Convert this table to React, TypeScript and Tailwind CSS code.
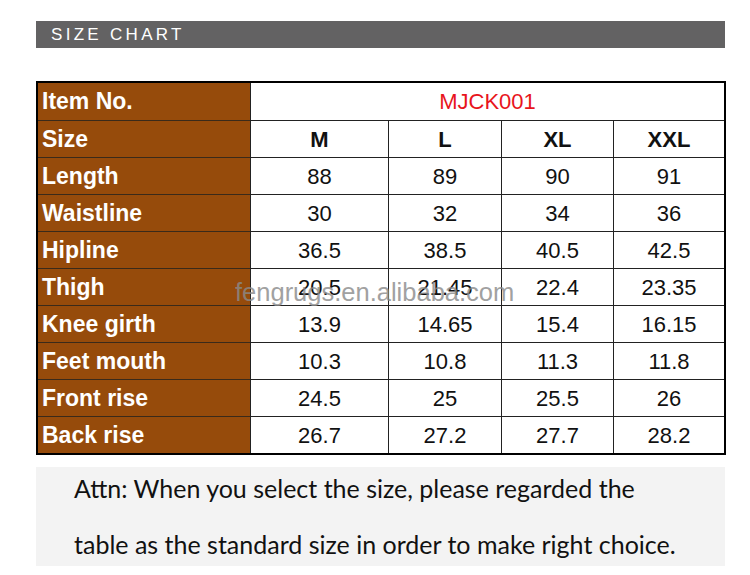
const sizes = ["M", "L", "XL", "XXL"];

const rows: [string, string[]][] = [
  ["Length", ["88", "89", "90", "91"]],
  ["Waistline", ["30", "32", "34", "36"]],
  ["Hipline", ["36.5", "38.5", "40.5", "42.5"]],
  ["Thigh", ["20.5", "21.45", "22.4", "23.35"]],
  ["Knee girth", ["13.9", "14.65", "15.4", "16.15"]],
  ["Feet mouth", ["10.3", "10.8", "11.3", "11.8"]],
  ["Front rise", ["24.5", "25", "25.5", "26"]],
  ["Back rise", ["26.7", "27.2", "27.7", "28.2"]],
];

function Label({ text, first }: { text: string; first?: boolean }) {
  return (
    <div
      className={`flex h-[37px] items-center bg-[#964b0b] pl-[4px] text-[23px] font-bold text-white ${
        first ? "" : "border-t border-t-[#3a2a1a]"
      }`}
    >
      {text}
    </div>
  );
}

function Cell({ text, bold, first }: { text: string; bold?: boolean; first?: boolean }) {
  return (
    <div
      className={`flex h-[37px] items-center justify-center border-l border-l-[#222] text-[22px] text-[#111] ${
        bold ? "font-bold" : ""
      } ${first ? "" : "border-t border-t-[#222]"}`}
    >
      {text}
    </div>
  );
}

export default function App() {
  return (
    <div className="h-[575px] w-[750px] bg-white pt-[21px] font-['Liberation_Sans',Arial,sans-serif]">
      {/* header bar */}
      <div className="ml-[36px] flex h-[27px] w-[689px] items-center bg-[#636263] pl-[15px]">
        <span className="text-[17px] tracking-[3.3px] text-white">SIZE CHART</span>
      </div>

      {/* table */}
      <div className="relative ml-[36px] mt-[33px] w-[690px] border-2 border-black">
        <div className="grid grid-cols-[212px_138px_113px_112px_111px]">
          <Label text="Item No." first />
          <div className="col-span-4 flex h-[37px] items-center justify-center border-l border-l-[#222] text-[22px] text-[#e8141c]">
            MJCK001
          </div>

          <Label text="Size" />
          {sizes.map((s) => (
            <Cell key={s} text={s} bold />
          ))}

          {rows.map(([name, vals]) => (
            <div key={name} className="contents">
              <Label text={name} />
              {vals.map((v, i) => (
                <Cell key={i} text={v} />
              ))}
            </div>
          ))}
        </div>

        {/* watermark */}
        <div className="pointer-events-none absolute left-[197px] top-[190px] text-[25.5px] text-[#8a8a8a] opacity-80">
          fengrugs.en.alibaba.com
        </div>
      </div>

      {/* note */}
      <div className="ml-[36px] mt-[12px] h-[99px] w-[689px] bg-[#f3f3f3] pl-[38px] font-['Lato',sans-serif] text-[25px] text-[#111]">
        <p className="leading-[42px]">Attn: When you select the size, please regarded the</p>
        <p className="leading-[70px]">table as the standard size in order to make right choice.</p>
      </div>
    </div>
  );
}
